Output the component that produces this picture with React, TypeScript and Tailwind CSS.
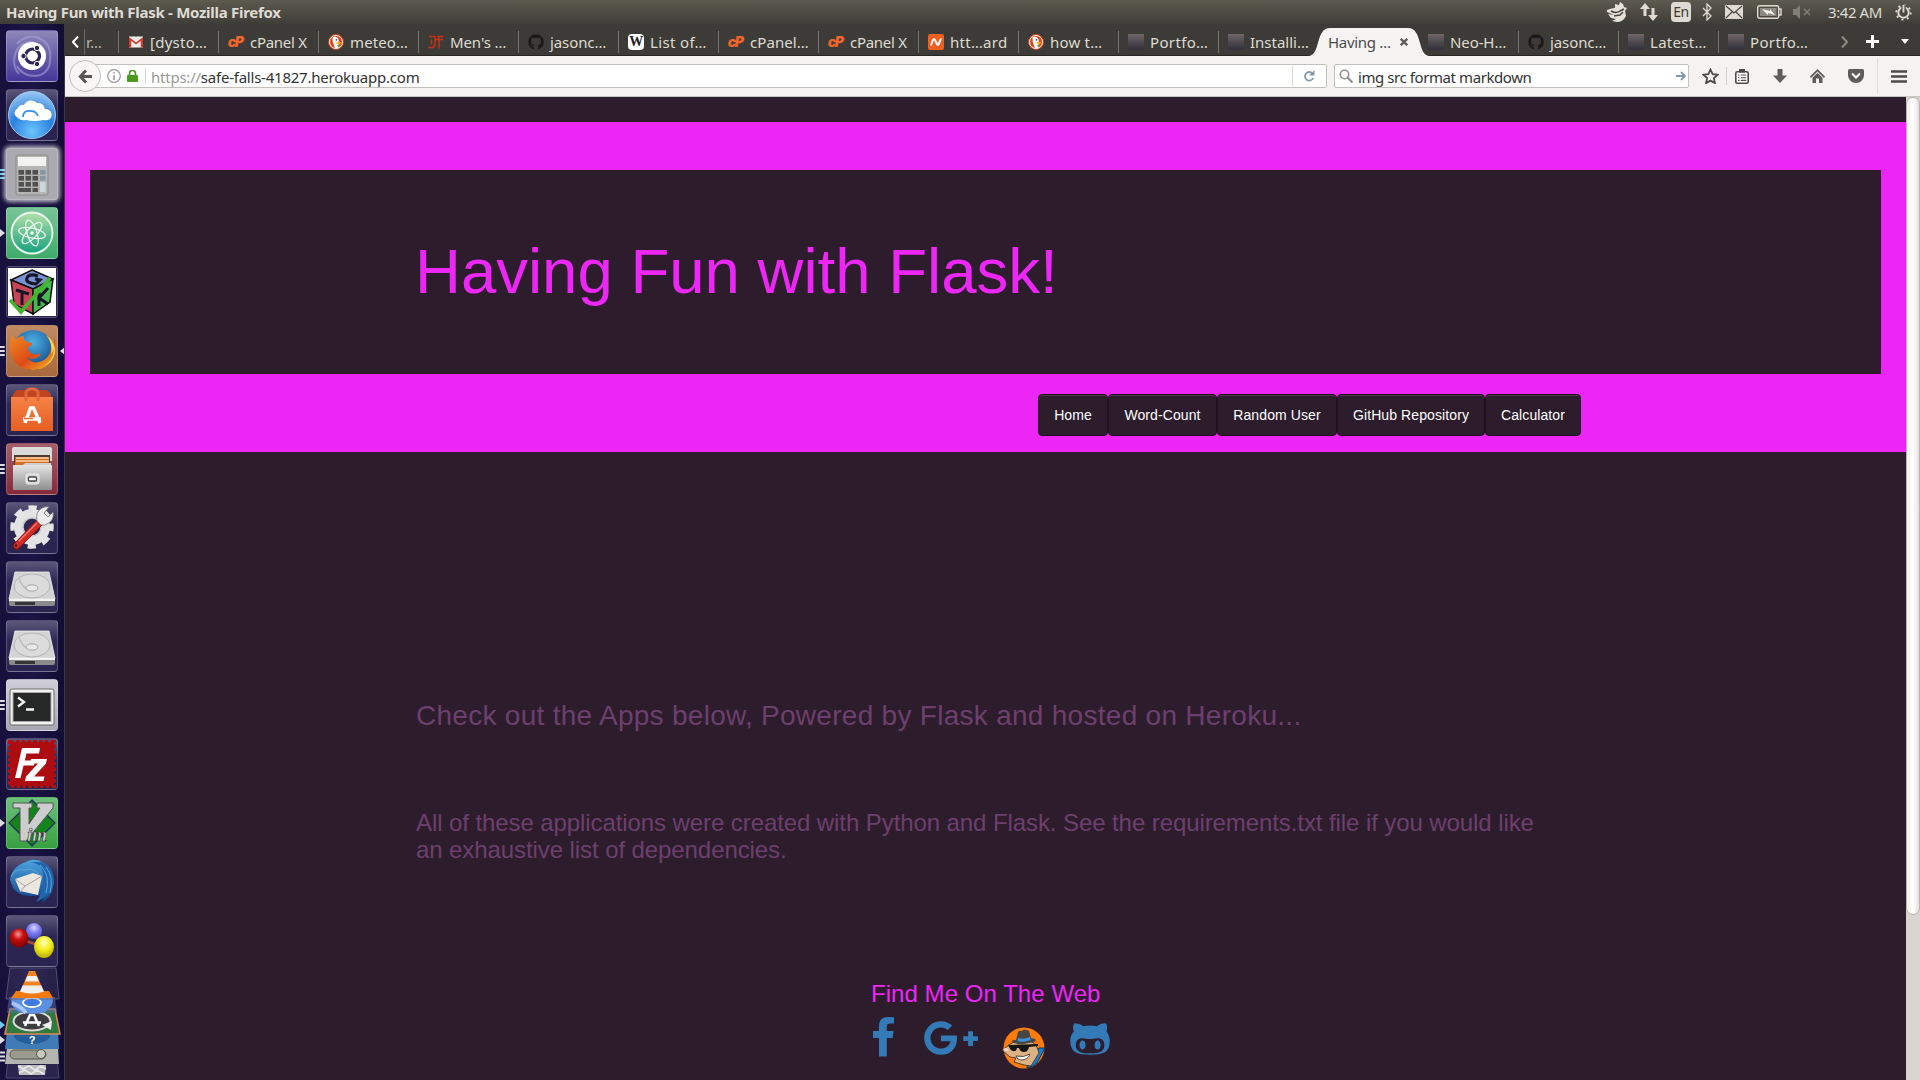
import React from 'react';
import { FaGooglePlusG, FaGithubAlt, FaGithub } from 'react-icons/fa';

type Kids = { children?: React.ReactNode };

/* ---------- favicons ---------- */

const Gmail = () => (
  <svg viewBox="0 0 16 16" className="size-4">
    <rect x="1" y="2.500" width="14" height="11" fill="#f1eeee" />
    <path d="M1 13.500V3l7 5.500L15 3v10.500h-2.200V6.800L8 10.500 3.200 6.800v6.700z" fill="#d8392d" />
  </svg>
);
const Duck = () => (
  <svg viewBox="0 0 16 16" className="size-4">
    <circle cx="8" cy="8" r="7.900" fill="#de4419" />
    <circle cx="8" cy="8" r="6.500" fill="none" stroke="#fff" strokeWidth="1" />
    <path d="M4.500 3.500c2-1.500 5-.5 6 2l.3 3-.3 5.200-3.500.3L4.800 8z" fill="#fff" />
    <path d="M8.500 8l5 .2-2 2-3-.2z" fill="#fdb913" />
    <path d="M8.500 11.500l3-.7v2.700z" fill="#3fae49" />
    <circle cx="8.400" cy="5.800" r=".9" fill="#2b4f9e" />
  </svg>
);
const Cp = () => (
  <span className="flex size-4 items-center justify-center pr-0.5 font-['Inter',sans-serif] text-[14px] font-black italic leading-none tracking-[-1.500px] text-[#f2652a]">cP</span>
);
const JT = () => (
  <svg viewBox="0 0 16 16" className="size-4">
    <path d="M1 2.500h6v8.500L5 13.500H.5M3.500 5.500v5M9 2.500h6.500M6.500 5.500H15M11 3v11.500" fill="none" stroke="#c23315" strokeWidth="1.600" />
  </svg>
);
const Git = () => <FaGithub className="size-4 text-[#1c1b1a]" />;
const Wiki = () => (
  <span className="flex size-4 items-center justify-center rounded-sm bg-white font-['Liberation_Serif',serif] text-[14px] font-bold leading-none tracking-tighter text-[#222]">W</span>
);
const Name = () => (
  <svg viewBox="0 0 16 16" className="size-4">
    <rect width="16" height="16" rx="2" fill="#ee5f23" />
    <path d="M2.500 11c1.500 0 2-6 3.500-6S8.500 11 10 11s1.500-6 3.500-6" fill="none" stroke="#fff" strokeWidth="2" />
  </svg>
);
const Shade = () => <span className="block size-4 bg-linear-to-b from-[#716668] to-[#30303b]" />;

const leftTabs: [React.FC, string, string][] = [
  [Gmail, '[dysto…', 'tracking-[0.250px]'],
  [Cp, 'cPanel X', 'tracking-[-0.280px]'],
  [Duck, 'meteo…', 'tracking-[0.100px]'],
  [JT, "Men's …", 'tracking-[-0.100px]'],
  [Git, 'jasonc…', 'tracking-[-0.100px]'],
  [Wiki, 'List of…', 'tracking-[0.350px]'],
  [Cp, 'cPanel…', 'tracking-[0.070px]'],
  [Cp, 'cPanel X', 'tracking-[-0.280px]'],
  [Name, 'htt…ard', 'tracking-[0.280px]'],
  [Duck, 'how t…', 'tracking-[0.200px]'],
  [Shade, 'Portfo…', 'tracking-[0.350px]'],
  [Shade, 'Installi…', 'tracking-[0px]'],
];
const rightTabs: [React.FC, string, string][] = [
  [Shade, 'Neo-H…', 'tracking-[-0.100px]'],
  [Git, 'jasonc…', 'tracking-[-0.100px]'],
  [Shade, 'Latest…', 'tracking-[0.280px]'],
  [Shade, 'Portfo…', 'tracking-[0.350px]'],
];

function Tab({ icon: Icon, label, tracking, line }: { icon: React.FC; label: string; tracking: string; line: boolean }) {
  return (
    <div className="flex h-[31px] w-[100px] shrink-0 items-center pt-[5px]">
      <span className={line ? 'h-[22px] w-px bg-[#75736d]' : 'h-[22px] w-px'} />
      <span className="ml-[9px] size-4 shrink-0"><Icon /></span>
      <span className={`ml-1.5 h-5 whitespace-nowrap text-[15px] leading-5 text-[#dfdbd2] ${tracking}`}>{label}</span>
    </div>
  );
}

/* ---------- launcher ---------- */

function Tile({ bg, children, pips, focus, glow }: Kids & { bg: string; pips?: 'three' | 'blue' | 'one'; focus?: boolean; glow?: boolean }) {
  return (
    <div className="relative flex h-[52px] w-[65px] shrink-0">
      <span className="flex w-1.5 flex-col items-start justify-center gap-0.5">
        {pips === 'three' && [0, 1, 2].map((i) => <i key={i} className="h-0.5 w-[5px] rounded-r bg-[#dcdce2]" />)}
        {pips === 'blue' && [0, 1, 2].map((i) => <i key={i} className="h-0.5 w-[5px] rounded-r bg-[#6fc6ea]" />)}
        {pips === 'one' && <svg viewBox="0 0 5 8" className="h-2 w-[5px]"><path d="M0 0l5 4-5 4z" fill="#dcdce2" /></svg>}
      </span>
      <div className={`flex size-[52px] overflow-hidden rounded-[4px] border border-white/20 ${glow ? 'shadow-[0_0_4px_2px_rgba(255,255,255,0.7)]' : ''} ${bg}`}>
        <svg viewBox="0 0 52 52" className="-m-px size-[52px] shrink-0">{children}</svg>
      </div>
      {focus && <svg viewBox="0 0 5 8" className="mt-[22px] ml-0.5 h-2 w-[5px]"><path d="M5 0L0 4l5 4z" fill="#dcdce2" /></svg>}
    </div>
  );
}

const night = 'bg-linear-to-b from-[#5c5779] via-[#2c2653] via-40% to-[#2a2450]';

const Drive = () => (
  <Tile bg={night}>
    <path d="M9 11h34l6 27H3z" fill="#d3d3d3" stroke="#f0f0f0" strokeWidth=".8" />
    <path d="M3 38h46v5q0 2-2 2H5q-2 0-2-2z" fill="#8b8b8b" />
    <path d="M3 38h46v2H3z" fill="#f4f4f4" />
    <path d="M9 41h20v3H9z" fill="#353535" />
    <ellipse cx="26" cy="25" rx="18" ry="12" fill="#dbdbdb" stroke="#b3b3b3" />
    <ellipse cx="26" cy="27" rx="6" ry="3.200" fill="#e8e8e8" stroke="#a5a5a5" />
    <path d="M13 17q2 8 10 13" stroke="#bcbcbc" fill="none" strokeWidth="1.300" />
  </Tile>
);

function Defs() {
  return (
    <svg className="absolute size-0">
      <defs>
        <radialGradient id="sky" cx=".5" cy=".85" r=".9">
          <stop offset="0" stopColor="#6cc4fb" /><stop offset=".5" stopColor="#2b7fe0" /><stop offset="1" stopColor="#a9d3f7" />
        </radialGradient>
        <radialGradient id="globe" cx=".5" cy=".3" r=".7">
          <stop offset="0" stopColor="#4fb0e4" /><stop offset="1" stopColor="#0d4285" />
        </radialGradient>
        <linearGradient id="fox" x1="0" y1="0" x2="1" y2="1">
          <stop offset="0" stopColor="#f08a26" /><stop offset=".55" stopColor="#dd4a15" /><stop offset="1" stopColor="#f9c22e" />
        </linearGradient>
        <linearGradient id="atom" x1="0" y1="0" x2="0" y2="1">
          <stop offset="0" stopColor="#b5dfa8" /><stop offset="1" stopColor="#12a27c" />
        </linearGradient>
        <linearGradient id="bag" x1="0" y1="0" x2="0" y2="1">
          <stop offset="0" stopColor="#f58345" /><stop offset="1" stopColor="#e85d22" />
        </linearGradient>
        <linearGradient id="metal" x1="0" y1="0" x2="0" y2="1">
          <stop offset="0" stopColor="#e4e4e4" /><stop offset="1" stopColor="#8f8f8f" />
        </linearGradient>
        <radialGradient id="red" cx=".45" cy=".3" r=".7"><stop offset="0" stopColor="#f49a9a" /><stop offset=".4" stopColor="#c81010" /><stop offset="1" stopColor="#7c0000" /></radialGradient>
        <radialGradient id="blue" cx=".5" cy=".3" r=".7"><stop offset="0" stopColor="#d6d6ff" /><stop offset=".5" stopColor="#7d7df0" /><stop offset="1" stopColor="#4c4cc4" /></radialGradient>
        <radialGradient id="yellow" cx=".5" cy=".3" r=".7"><stop offset="0" stopColor="#ffffc0" /><stop offset=".5" stopColor="#f3ee1c" /><stop offset="1" stopColor="#b9ad00" /></radialGradient>
        <linearGradient id="bird" x1="0" y1="0" x2="0" y2="1">
          <stop offset="0" stopColor="#4aa5e0" /><stop offset="1" stopColor="#123f86" />
        </linearGradient>
      </defs>
    </svg>
  );
}

function Stack() {
  return (
    <svg viewBox="0 0 65 113" className="-mt-[7px] h-[113px] w-[65px] shrink-0">
      {/* trash */}
      <path d="M8 92h49l2 19H6z" fill="#2a244e" stroke="#4a4670" />
      <path d="M18 98h28l-1 10H19z" fill="#bdbdbd" />
      <path d="M18 99l5 3 6-3 6 4 6-4 5 3M19 106l6-3 6 4 6-4 7 4" stroke="#e8e8e8" fill="none" strokeWidth="1.600" />
      {/* scroll */}
      <path d="M7 81h51l1 16H5z" fill="#b4b5b0" />
      <rect x="10" y="83" width="36" height="9" rx="4.500" fill="#9a9b8e" stroke="#55564c" />
      <circle cx="41" cy="87" r="4.500" fill="#c8c9bd" stroke="#55564c" />
      {/* help */}
      <path d="M7 64h51l1 18H5z" fill="#3f7cb5" />
      <ellipse cx="32" cy="68" rx="18" ry="9" fill="#245f9c" />
      <text x="32" y="77" textAnchor="middle" fontSize="11" fontWeight="700" fill="#fff" fontFamily="Liberation Sans">?</text>
      {/* updater */}
      <path d="M10 42h45l5 25H5z" fill="#2f7a3c" stroke="#e08a5a" strokeWidth="1.500" />
      <ellipse cx="32" cy="54" rx="18.500" ry="9.500" fill="#3d3d3f" stroke="#dadada" strokeWidth="2" />
      <path d="M25 59l5-11h4l5 11M23 55.500h18" stroke="#fff" strokeWidth="2.500" fill="none" />
      <path d="M42 58l10-4-1 9z" fill="#eee" />
      {/* chromium */}
      <path d="M9 30h46l2 16H7z" fill="#5b70a8" fillOpacity=".5" />
      <path d="M11 33q0-6 21-6t21 6-8 12q-13 4-26 0-8-5-8-12z" fill="#5b8fe0" />
      <path d="M12 36q10 4 14 10" stroke="#a8c6f2" strokeWidth="4" fill="none" />
      <ellipse cx="32" cy="35.500" rx="9" ry="4.500" fill="#3d7be0" stroke="#fff" strokeWidth="1.800" />
      {/* vlc */}
      <path d="M10 1h46l3 31H6z" fill="#fff" fillOpacity=".08" stroke="#5f5b80" strokeWidth=".8" />
      <path d="M16 24h33l4 7H11z" fill="#ef7a12" />
      <path d="M29 4h6l9 21q-12 5-24 0z" fill="#ef8420" />
      <path d="M27.300 9h9.400l2.300 5.500H25zM22.600 18.500h18.800l2.600 6q-12 4-24 0z" fill="#f2f0ec" />
      {/* running marks */}
      <path d="M0 54l5 4-5 4z" fill="#6fc6ea" />
      <path d="M0 69l5 4-5 4z" fill="#dcdce2" />
      <path d="M0 85.500h5M0 89.500h5M0 93.500h5" stroke="#dcdce2" strokeWidth="2" />
    </svg>
  );
}

function Launcher() {
  return (
    <aside className="flex h-[1056px] w-[65px] shrink-0 flex-col gap-[7px] overflow-hidden border-r border-[#3a3552] bg-linear-to-r from-[#17103c] via-[#1b1446] to-[#120d33] pt-1.5">
      <Tile bg="bg-linear-to-b from-[#8f87b8] to-[#46359a]">
        <path d="M11 14C24-2 48 10 44 30M44 30C44 50 18 50 11 36M13 44C2 32 10 10 28 12" fill="none" stroke="#a9a2d4" strokeWidth="2" opacity=".6" />
        <circle cx="26" cy="26" r="14" fill="#fff" />
        <circle cx="26.500" cy="26" r="7" fill="none" stroke="#2d2458" strokeWidth="3.200" />
        <g fill="#2d2458" stroke="#fff" strokeWidth="1"><circle cx="17.500" cy="26" r="2.700" /><circle cx="31" cy="18" r="2.700" /><circle cx="31" cy="34" r="2.700" /></g>
      </Tile>
      <Tile bg={night}>
        <circle cx="26" cy="26" r="23.500" fill="url(#sky)" stroke="#9cc9f2" />
        <path d="M12 29a5 5 0 01-1-9 6 6 0 017-4 8 8 0 0113-2 7 7 0 018 6 6 6 0 015 10q-3 2-7 1-8 2-17 0-5 1-8-2z" fill="#fff" />
        <path d="M17 28q0-7 8-6 5 0 7 5" fill="none" stroke="#3c93e6" strokeWidth="1.800" />
      </Tile>
      <Tile bg="bg-[#aaaab0]" pips="blue" glow>
        <rect x="10" y="7" width="32" height="40" rx="2" fill="#b4b4b2" stroke="#8a8a88" />
        <rect x="12" y="9" width="28" height="9" fill="#f2f2f0" />
        {[0, 1, 2].map((r) => [0, 1, 2].map((c) => <rect key={`${r}${c}`} x={12.5 + c * 7} y={22 + r * 6} width="5.500" height="4.600" fill="#505050" />))}
        <rect x="34" y="22" width="5.500" height="4.600" fill="#8298a6" /><rect x="34" y="28" width="5.500" height="4.600" fill="#8298a6" />
        <rect x="34" y="34" width="5.500" height="10" fill="#cdd8de" /><rect x="12.500" y="40" width="12.500" height="4" fill="#505050" /><rect x="26.500" y="40" width="5.500" height="4" fill="#505050" />
      </Tile>
      <Tile bg="bg-linear-to-b from-[#78c598] to-[#3daa6a]" pips="one">
        <circle cx="26" cy="26" r="20.500" fill="url(#atom)" stroke="#eaf7ee" strokeWidth="1.800" />
        <g fill="none" stroke="#eefaf0" strokeWidth="1.300">
          <ellipse cx="26" cy="26" rx="13.500" ry="5" transform="rotate(12 26 26)" /><ellipse cx="26" cy="26" rx="13.500" ry="5" transform="rotate(72 26 26)" /><ellipse cx="26" cy="26" rx="13.500" ry="5" transform="rotate(132 26 26)" />
        </g>
        <circle cx="26" cy="26" r="1.800" fill="#fff" />
      </Tile>
      <Tile bg="bg-[#2a2450]">
        <rect x="2" y="2" width="48" height="48" fill="#fff" />
        <path d="M26 4l21 9-20 10L5 14z" fill="#7a92d2" stroke="#111" strokeWidth="1.500" />
        <path d="M5 14l22 9v25L8 38z" fill="#c94455" stroke="#111" strokeWidth="1.500" />
        <path d="M27 23l20-10-3 23-17 12z" fill="#44bb4c" stroke="#111" strokeWidth="1.500" />
        <path d="M32 10q-9-3-11 2t9 6l4-4-5-1M10 24l13 4M16 27v12M33 26v14M42 22l-9 10 9 6" fill="none" stroke="#16162a" strokeWidth="3" />
        <path d="M4 34l11 12L44 12" fill="none" stroke="#45b32e" strokeWidth="3.500" />
      </Tile>
      <Tile bg="bg-linear-to-b from-[#c08a62] to-[#a9683d]" pips="three" focus>
        <circle cx="27" cy="25" r="20" fill="url(#globe)" />
        <path d="M6 10l3 5q4-4 9-4-1 4 3 6l5 1q1 2-4 4-1 4 3 6 5 3 9 0 2 2-2 4-6 4-12 0 8 9 18 3 8-5 8-18l2 4 0-8q4 10-1 20-7 13-21 12-16-1-21-16-3-10 1-19z" fill="url(#fox)" />
        <path d="M40 10q7 8 5 19l3-5q-1 12-10 17 8-2 11-13 1-11-9-18z" fill="#fbd54a" />
      </Tile>
      <Tile bg={night}>
        <path d="M7 10l4-4h30l4 4v7H5z" fill="#be4520" /><path d="M5 13h42v34H5z" fill="url(#bag)" />
        <path d="M20 17V9q0-4 6-4t6 4v8" fill="none" stroke="#e0683f" strokeWidth="3" />
        <path d="M19 39l5.500-15h3L34 39M17 35h18" fill="none" stroke="#fff" strokeWidth="3.500" />
        <path d="M18 34.500h9" stroke="#ee6b2e" strokeWidth="1.300" />
      </Tile>
      <Tile bg="bg-linear-to-b from-[#a5606a] to-[#85293a]" pips="three">
        <path d="M6 6q0-2 2-2h36q2 0 2 2v12H6z" fill="#dadad8" /><path d="M8 12h36v12H8z" fill="#4b3932" />
        <path d="M9 14h34v10H9z" fill="#d96a24" /><path d="M10 15h33M10 18h33" stroke="#fbd9a8" strokeWidth="1.500" />
        <path d="M19 20h26v5H8v-3h9z" fill="#cfcfcd" /><rect x="7" y="22" width="39" height="25" rx="1" fill="url(#metal)" />
        <rect x="20" y="31" width="13" height="10" rx="2" fill="#d8d8d8" stroke="#eee" /><rect x="22.500" y="34" width="8" height="4" rx="1" fill="#fff" stroke="#444" strokeWidth="1.300" />
      </Tile>
      <Tile bg={night}>
        <circle cx="26" cy="25" r="13.500" fill="none" stroke="#e4e4e4" strokeWidth="9" />
        <circle cx="26" cy="25" r="19.500" fill="none" stroke="#e4e4e4" strokeWidth="4.500" strokeDasharray="8.300 7.015" strokeDashoffset="4.150" />
        <circle cx="26" cy="25" r="9" fill="#2c2653" stroke="#c8c8c8" strokeWidth="1.500" />
        <path d="M7 43L31 18l5 5-24 24q-4 1-5-4z" fill="#d22a25" stroke="#8d120f" /><path d="M13 39l18-18" stroke="#f17a72" strokeWidth="1.500" />
        <path d="M31 19q-2-9 5-13 4-2 7-1l-5 6 4 4 5-5q2 9-8 13l-4 0z" fill="#ececec" stroke="#777" strokeWidth=".8" />
        <circle cx="10" cy="43.500" r="1.300" fill="#4e0706" />
      </Tile>
      <Drive />
      <Drive />
      <Tile bg="bg-linear-to-b from-[#cfcdd8] to-[#a8a6b0]" pips="three">
        <rect x="4" y="10" width="44" height="36" rx="2" fill="#f2f2f2" stroke="#6b6b6b" /><rect x="7" y="13.500" width="38" height="29" fill="#252827" stroke="#aaa" />
        <path d="M12 18.500l6 4.500-6 4.500M20 30.500h8" fill="none" stroke="#f4f4f4" strokeWidth="2.300" />
      </Tile>
      <Tile bg={night}>
        <rect x="4" y="4" width="44" height="44" fill="#b01114" stroke="#b01114" strokeWidth="4" strokeDasharray="3.600 2.200" />
        <rect x="4" y="4" width="44" height="44" fill="#ad0d10" />
        <path d="M9 40L16 10H34L33 15.500H20.500L18.800 22.500H29L28 27.500H17.600L14.500 40zM25 21h16l-1 4.500-12 13h10.500l-1 4.500H19l1-4.500 12-13h-8z" fill="#fff" />
      </Tile>
      <Tile bg="bg-linear-to-b from-[#6cc07a] to-[#36a03f]" pips="one">
        <path d="M26 3l23 23-23 23L3 26z" fill="#14831b" stroke="#1b2c63" strokeWidth="1.200" />
        <path d="M7 6h19v5h-3v16L34 11h-3V6h16v5L20 44h-6V11H7z" fill="#cdcdcd" stroke="#555" strokeWidth="1" />
        <text x="21" y="44" fontFamily="Liberation Serif" fontSize="19" fontStyle="italic" fontWeight="700" fill="#dadada" stroke="#333" strokeWidth=".6">im</text>
      </Tile>
      <Tile bg={night}>
        <path d="M4 24Q6 10 20 6q8-5 18 1 10 8 10 20-2 14-12 20l3-8-14 1q-14-1-18-8z" fill="url(#bird)" />
        <path d="M9 23l18-6 9 3-4 19-18-4z" fill="#ebe6e0" /><path d="M9 23l10 7 17-10M19 30l-5 6" fill="none" stroke="#a9a29b" />
        <path d="M24 6q14 2 13 14 1 16-7 26 17-7 18-22Q47 10 36 6z" fill="#1f66ac" /><path d="M5 21q3-9 14-7 7-3 14 4M34 9q11 10 6 28M40 11q8 10 4 26" fill="none" stroke="#5ba6dc" strokeWidth="1" />
      </Tile>
      <Tile bg={night}>
        <path d="M15 24l22 8M28 17l-12 7" stroke="#a94b38" strokeWidth="2.500" />
        <circle cx="28" cy="16" r="8" fill="url(#blue)" /><circle cx="13" cy="23" r="9.500" fill="url(#red)" /><ellipse cx="38" cy="32" rx="10" ry="11" fill="url(#yellow)" />
      </Tile>
      <Stack />
    </aside>
  );
}

/* ---------- top panel ---------- */

function Panel() {
  return (
    <header className="flex h-6 shrink-0 items-center bg-linear-to-b from-[#5d5a4f] to-[#3f3d38] pl-1.5 text-[#dfdbd2]">
      <h1 className="w-[300px] whitespace-nowrap text-[15px] font-bold leading-6 tracking-[-0.280px]">Having Fun with Flask - Mozilla Firefox</h1>
      <div className="ml-auto flex h-6 items-center">
        <svg viewBox="0 0 22 22" className="size-[22px]">
          <path d="M1 9q5-2 8-2l0-4 4 1 1-3 3 2 1 3 3 1-2 3 1 5q-3 6-9 6l-5-1 4-2-5-1-3-4 6 1-7-3z" fill="#e6e2d9" /><path d="M5 10q5 3 9 0l4-2M8 15l6-1 3-3" stroke="#47443d" strokeWidth="1.500" fill="none" />
        </svg>
        <svg viewBox="0 0 18 20" className="ml-3 h-5 w-[18px]">
          <path d="M5 14V3M13 6v11" stroke="#dfdbd2" strokeWidth="3" /><path d="M0 7l5-6 5 6zM8 13l5 6 5-6z" fill="#dfdbd2" />
        </svg>
        <span className="ml-[13px] flex h-5 w-5 items-center justify-center rounded-sm bg-[#dfdbd2] text-[14px] leading-none tracking-[-0.500px] text-[#3c3b37]">En</span>
        <svg viewBox="0 0 10 18" className="ml-[11px] h-[18px] w-2.5"><path d="M1 5l8 8-4 4V1l4 4-8 8" fill="none" stroke="#dfdbd2" strokeWidth="1.300" /></svg>
        <svg viewBox="0 0 18 14" className="ml-[13px] h-3.5 w-[18px]"><rect width="18" height="14" rx="1" fill="#dfdbd2" /><path d="M1 1l8 7 8-7M1 13l6-6M17 13l-6-6" fill="none" stroke="#4a4842" strokeWidth="1.200" /></svg>
        <svg viewBox="0 0 25 14" className="ml-3.5 h-3.5 w-[25px]"><rect x=".7" y=".7" width="21" height="12.600" rx="2" fill="none" stroke="#dfdbd2" strokeWidth="1.400" /><rect x="3" y="3" width="16.500" height="8" fill="#8d8a83" /><path d="M22 4h2v6h-2" fill="none" stroke="#dfdbd2" strokeWidth="1.400" /><path d="M5 4l8 2 0-2 5 6-7-2v2z" fill="#f2efe8" /></svg>
        <svg viewBox="0 0 18 14" className="ml-[11px] h-3.5 w-[18px]"><path d="M0 4h3l4-4v14l-4-4H0z" fill="#827f76" /><path d="M11 4l6 6M17 4l-6 6" stroke="#827f76" strokeWidth="1.500" /></svg>
        <span className="ml-[17px] w-[55px] whitespace-nowrap text-[15px] leading-6 tracking-[-0.430px]">3:42 AM</span>
        <svg viewBox="0 0 18 18" className="mr-2 ml-[12px] size-[17px]"><circle cx="9" cy="9" r="5.500" fill="none" stroke="#dfdbd2" strokeWidth="2" /><circle cx="9" cy="9" r="7.600" fill="none" stroke="#dfdbd2" strokeWidth="2" strokeDasharray="2.200 3.770" /><path d="M9 1v8" stroke="#45423b" strokeWidth="4.500" /><path d="M9 1v8" stroke="#dfdbd2" strokeWidth="2" /></svg>
      </div>
    </header>
  );
}

/* ---------- browser ---------- */

function TabBar() {
  return (
    <div className="flex h-8 shrink-0 items-center border-b border-[#262522] bg-[#3c3b37]">
      <div className="flex h-[31px] w-[53px] shrink-0 items-center pt-[5px]">
        <svg viewBox="0 0 7 12" className="ml-[7px] h-3 w-[7px]"><path d="M6 .5L1 6l5 5.500" fill="none" stroke="#fff" strokeWidth="2" /></svg>
        <span className="ml-[5px] h-[26px] w-px bg-[#6c6a64]" />
        <span className="h-5 whitespace-nowrap pl-px text-[15px] leading-5 tracking-[0.200px] text-[#b9b5ac]">r…</span>
      </div>
      {leftTabs.map(([icon, label, tracking], i) => <Tab key={i} icon={icon} label={label} tracking={tracking} line />)}
      <div className="relative flex h-[31px] w-[100px] shrink-0 items-center pt-[5px]">
        <svg viewBox="0 0 126 28" preserveAspectRatio="none" className="absolute top-1 -left-[12px] h-7 w-[126px]">
          <path d="M2 28C15 28 9 0 24 0H102C117 0 111 28 124 28z" fill="#f5f4f2" />
        </svg>
        <span className="relative ml-2.5 h-5 whitespace-nowrap text-[15px] leading-5 tracking-[-0.300px] text-[#4c4c4c]">Having …</span>
        <svg viewBox="0 0 8 8" className="absolute top-[14px] left-[82px] size-2"><path d="M.8.8l6.400 6.400M7.200.8L.8 7.200" stroke="#5c5c5a" strokeWidth="2.300" /></svg>
      </div>
      {rightTabs.map(([icon, label, tracking], i) => <Tab key={i} icon={icon} label={label} tracking={tracking} line={i > 0} />)}
      <div className="flex h-[31px] items-center pt-[4px]">
        <svg viewBox="0 0 7 12" className="ml-[23px] h-3 w-[7px]"><path d="M1 .5L6 6l-5 5.500" fill="none" stroke="#8e8b84" strokeWidth="2" /></svg>
        <svg viewBox="0 0 13 13" className="ml-[18px] size-[13px]"><path d="M6.500 0v13M0 6.500h13" stroke="#fff" strokeWidth="3" /></svg>
        <svg viewBox="0 0 8 5" className="ml-[22px] h-[5px] w-2"><path d="M0 0h8L4 5z" fill="#fff" /></svg>
      </div>
    </div>
  );
}

function Toolbar() {
  return (
    <div className="flex h-[41px] shrink-0 items-center border-b border-[#c9c5c1] bg-[#f4f3f1]">
      <span className="relative z-10 ml-1 flex size-8 shrink-0 items-center justify-center rounded-full border border-[#c1bfbb] bg-[#f8f7f6]">
        <svg viewBox="0 0 16 16" className="size-[15px]"><path d="M8.500 1.500L2.500 8l6 6.500M3 8h12" fill="none" stroke="#555" strokeWidth="3.200" /></svg>
      </span>
      <div className="-ml-2.5 flex h-6 w-[1236px] shrink-0 items-center rounded-[2px] border border-[#c4c1bc] bg-white">
        <svg viewBox="0 0 14 14" className="ml-[15px] size-3.5"><circle cx="7" cy="7" r="6.300" fill="none" stroke="#999" strokeWidth="1.200" /><path d="M7 6v5M7 3v1.600" stroke="#999" strokeWidth="1.600" /></svg>
        <svg viewBox="0 0 11 12" className="ml-[6px] h-3 w-[11px]"><path d="M2.500 6V3.500a3 3 0 016 0V6" fill="none" stroke="#4b9a20" strokeWidth="1.700" /><rect y="5" width="11" height="7" rx="1" fill="#4b9a20" /></svg>
        <span className="ml-[7px] h-4 w-px bg-[#d2d2d2]" />
        <span className="ml-[5px] h-5 whitespace-nowrap text-[15px] leading-[22px] tracking-[-0.230px] text-[#333]"><span className="text-[#999]">https://</span>safe-falls-41827.herokuapp.com</span>
        <span className="ml-auto h-5 w-px bg-[#dcdad7]" />
        <svg viewBox="0 0 12 12" className="mr-[11px] ml-2.5 size-3"><path d="M9.500 3.500A4.300 4.300 0 1010.200 8" fill="none" stroke="#8698a8" strokeWidth="1.800" /><path d="M11.500 0v5.500H6z" fill="#8698a8" /></svg>
      </div>
      <div className="ml-[7px] flex h-6 w-[355px] shrink-0 items-center rounded-[2px] border border-[#c4c1bc] bg-white">
        <svg viewBox="0 0 14 14" className="ml-1 size-3.5"><circle cx="5.500" cy="5.500" r="4.200" fill="none" stroke="#8f8f8f" strokeWidth="1.600" /><path d="M8.500 8.500l5 5" stroke="#8f8f8f" strokeWidth="2.200" /></svg>
        <span className="ml-[5px] h-5 whitespace-nowrap text-[15px] leading-[22px] tracking-[-0.420px] text-[#333]">img src format markdown</span>
        <svg viewBox="0 0 10 10" className="mr-[2px] ml-auto size-2.5"><path d="M0 5h8M5 1l4 4-4 4" fill="none" stroke="#8498a8" strokeWidth="1.800" /></svg>
      </div>
      <div className="flex flex-1 items-center">
        <svg viewBox="0 0 17 16" className="ml-[13px] h-4 w-[17px]"><path d="M8.500 1.500l2.100 4.600 5 .6-3.700 3.400 1 5-4.400-2.500-4.400 2.500 1-5L1.400 6.700l5-.6z" fill="none" stroke="#4a4a4a" strokeWidth="1.800" /></svg>
        <span className="ml-[7px] h-[18px] w-px bg-[#d5d2ce]" />
        <svg viewBox="0 0 14 15" className="ml-2 h-[15px] w-3.5"><rect x=".8" y="2.800" width="12.400" height="11.400" rx="1.500" fill="#fff" stroke="#4a4a4a" strokeWidth="1.600" /><path d="M4 0h6v3.600H4z" fill="#4a4a4a" /><path d="M3 6h1.500M5.800 6h5.400M3 8.700h1.500M5.800 8.700h5.400M3 11.400h1.500M5.800 11.400h5.400" stroke="#4a4a4a" strokeWidth="1.100" /></svg>
        <svg viewBox="0 0 14 14" className="ml-6 size-3.5"><path d="M4.500 0h5v6.500H14L7 14 0 6.500h4.500z" fill="#5c5c5c" /></svg>
        <svg viewBox="0 0 15 14" className="ml-[23px] h-3.5 w-[15px]"><path d="M0 7.500L7.500 0 15 7.500 14 9 7.500 2.600 1 9z" fill="#5c5c5c" /><path d="M2.500 8.800l5-5 5 5V14H9V9.500H6V14H2.500z" fill="#5c5c5c" /></svg>
        <svg viewBox="0 0 16 14" className="ml-[23px] h-3.5 w-4"><path d="M1.500 0h13Q16 0 16 1.500V6a8 8 0 01-16 0V1.500Q0 0 1.500 0z" fill="#5c5c5c" /><path d="M4 4.500l4 4 4-4" fill="none" stroke="#fff" strokeWidth="2" /></svg>
        <span className="ml-[13px] h-9 w-px bg-[#dfddda]" />
        <svg viewBox="0 0 16 13" className="ml-[13px] h-[13px] w-4"><path d="M0 1.500h16M0 6.500h16M0 11.500h16" stroke="#4c4c4c" strokeWidth="2.600" /></svg>
      </div>
    </div>
  );
}

const nav: [string, string][] = [
  ['Home', 'w-[70px]'],
  ['Word-Count', 'w-[109px]'],
  ['Random User', 'w-[120px]'],
  ['GitHub Repository', 'w-[148px]'],
  ['Calculator', 'w-[96px]'],
];

const Fugitive = () => (
  <svg viewBox="0 0 44 44" className="size-11">
    <circle cx="22" cy="23" r="20.500" fill="#f97c0c" />
    <path d="M25 42l12-19 6 0-8 15q-4 4-10 5z" fill="#1e7fd0" stroke="#17334f" />
    <path d="M8 19q7-4 13-4 10 0 14 7l2 6-8 13-7-1-10-3 2-4-6-1-7-6q-1-3 1-2z" fill="#dcb183" stroke="#3c2a18" strokeWidth=".8" />
    <path d="M1 24q3-2 5 0l1 2-4 0z" fill="#f2d7c8" />
    <path d="M14 31q8 2 14-2-2 6-9 6-4 0-5-4z" fill="#fff" stroke="#3c2a18" strokeWidth=".8" />
    <path d="M10 17q5 3 12 2l10-2q3-2 1-3l-4-1-2-7q-5-3-7 0-3-1-4 1l-2 8q-5 0-4 2z" fill="#484545" />
    <path d="M16 13q6 2 12-1l.600 3q-7 3-13 1z" fill="#3a94de" />
    <path d="M6 20l30-1v2l-9 1q-1 5-5 5t-5-4l-2 0q-1 4-4 3t-4-4z" fill="#141414" />
  </svg>
);

function Page() {
  return (
    <main className="flex min-h-0 flex-1 bg-[#2c1c2c] font-['Liberation_Sans',Arial,sans-serif]">
      <div className="flex w-[1841px] shrink-0 flex-col overflow-hidden pt-[25px]">
        <section className="flex h-[330px] shrink-0 flex-col bg-[#ec26f5] px-[25px] pt-12">
          <div className="flex h-[204px] bg-[#2c1c2c] pl-[325px]">
            <h2 className="mt-[67px] whitespace-nowrap text-[63.500px] leading-[69px] tracking-[0.020px] text-[#ec26f5]">Having Fun with Flask!</h2>
          </div>
          <nav className="mt-5 ml-[948px] flex">
            {nav.map(([label, width]) => (
              <a key={label} className={`flex h-[42px] items-center justify-center rounded-[4px] border border-[#1f121f] bg-[#2c1c2c] text-[14px] tracking-[0.100px] whitespace-nowrap text-white shadow-[inset_0_1px_0_rgba(255,255,255,0.15)] ${width}`}>{label}</a>
            ))}
          </nav>
        </section>
        <section className="flex flex-col pl-[351px] text-[#6c406d]">
          <p className="mt-[248px] h-8 whitespace-nowrap text-[28px] leading-8 tracking-[0.280px]">Check out the Apps below, Powered by Flask and hosted on Heroku...</p>
          <p className="mt-[77px] whitespace-nowrap text-[24px] leading-[27px] tracking-[-0.086px]">All of these applications were created with Python and Flask. See the requirements.txt file if you would like<br />an exhaustive list of dependencies.</p>
        </section>
        <footer className="mt-[117px] flex flex-col pl-[806px]">
          <h3 className="h-[27px] whitespace-nowrap text-[24px] leading-[27px] tracking-[0.050px] text-[#ec26f5]">Find Me On The Web</h3>
          <div className="mt-[10px] flex h-12 text-[#337ab7]">
            <svg viewBox="0 0 21 40" className="ml-0.5 h-10 w-[21px] shrink-0" fill="currentColor"><path d="M21 .3v6.200h-3.800q-3.400 0-3.400 3.400V14H20.600l-1 7H13.800v18.500H6V21H0v-7h6V8.800Q6 0 15 0q4 0 6 .3z" /></svg>
            <FaGooglePlusG className="mt-[-6px] ml-[29px] h-[54px] w-[56px] shrink-0" />
            <span className="mt-[8px] ml-[23px] shrink-0"><Fugitive /></span>
            <FaGithubAlt className="mt-px ml-6 h-[42px] w-10 shrink-0" />
          </div>
        </footer>
      </div>
      <div className="flex w-3.5 flex-col bg-[#d8d4cf]">
        <span className="h-[818px] rounded-full border border-[#b9b5af] bg-linear-to-r from-[#f1f0ee] via-white to-[#e3e1de]" />
      </div>
    </main>
  );
}

export default function App() {
  return (
    <div className="flex h-[1080px] w-[1920px] flex-col overflow-hidden bg-[#2c1c2c] font-['Noto_Sans','Open_Sans',sans-serif]">
      <Defs />
      <Panel />
      <div className="flex min-h-0 flex-1">
        <Launcher />
        <div className="flex min-w-0 flex-1 flex-col">
          <TabBar />
          <Toolbar />
          <Page />
        </div>
      </div>
    </div>
  );
}
